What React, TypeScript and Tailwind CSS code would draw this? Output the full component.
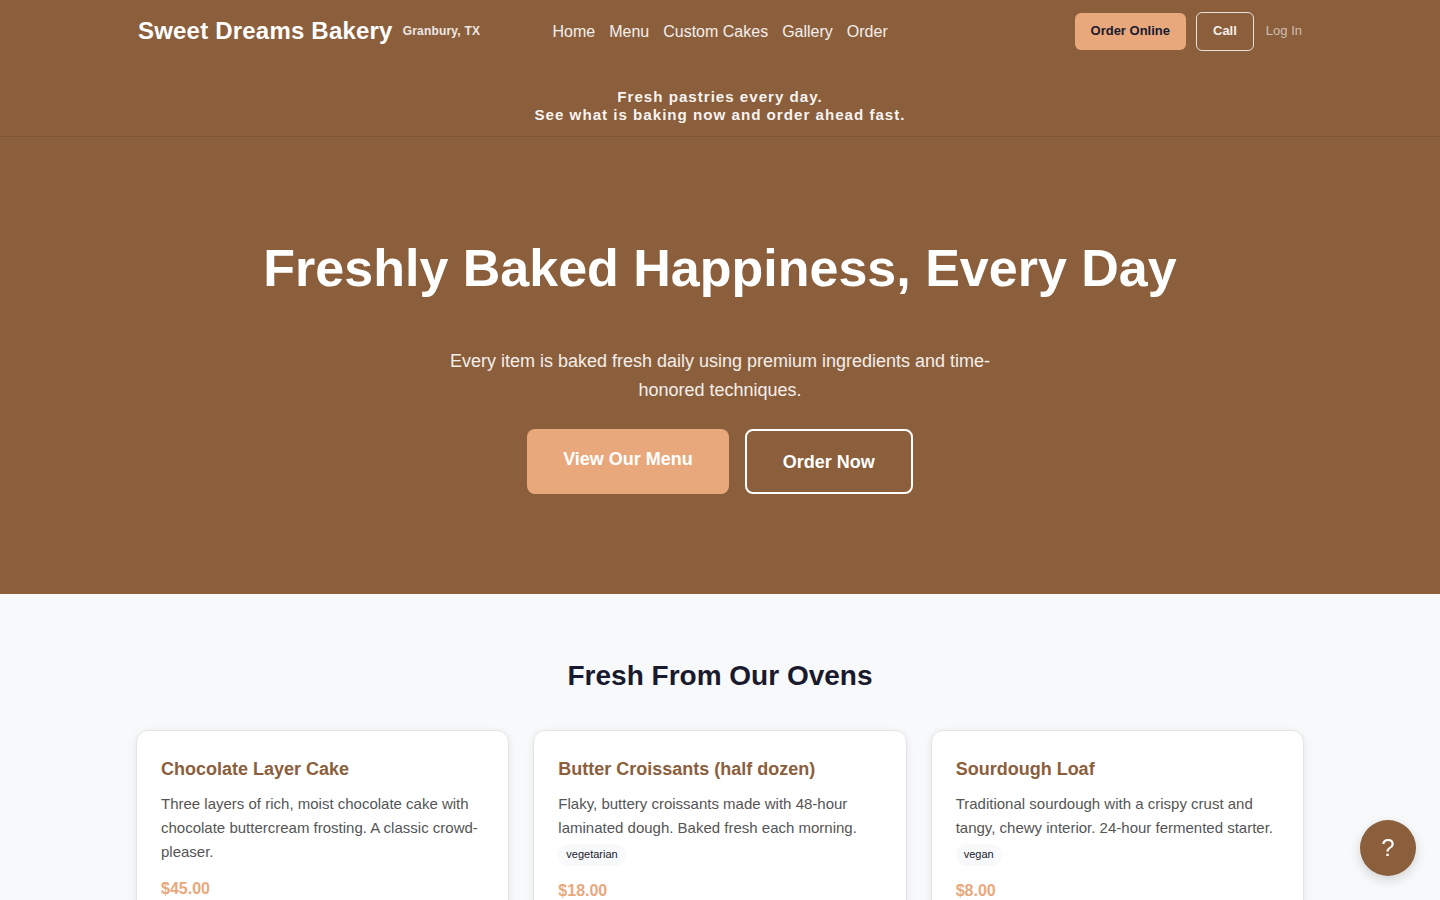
const font = "font-['Liberation_Sans',Arial,sans-serif]";

const cards = [
  { title: "Chocolate Layer Cake", text: "Three layers of rich, moist chocolate cake with chocolate buttercream frosting. A classic crowd-pleaser.", tag: "", price: "$45.00" },
  { title: "Butter Croissants (half dozen)", text: "Flaky, buttery croissants made with 48-hour laminated dough. Baked fresh each morning.", tag: "vegetarian", price: "$18.00" },
  { title: "Sourdough Loaf", text: "Traditional sourdough with a crispy crust and tangy, chewy interior. 24-hour fermented starter.", tag: "vegan", price: "$8.00" },
];

export default function App() {
  return (
    <div className={`${font} h-[900px] overflow-hidden bg-[#f8f9fa] leading-[1.6]`}>
      <header className="bg-[#8b5e3c] border-b border-[#7d5436]">
        <div className="mx-auto w-[1168px] h-[62px] flex items-center">
          <div className="w-[416.5px] pl-[2px] flex items-center gap-[10px] tracking-[0.2px]">
            <span className="text-[24px] font-bold text-white leading-[1.6]">Sweet Dreams Bakery</span>
            <span className="text-[12px] font-bold text-white/85 pt-[1px]">Granbury, TX</span>
          </div>
          <nav className="flex gap-[14px] pt-[1px] text-[16px] text-white/90">
            <a>Home</a><a>Menu</a><a>Custom Cakes</a><a>Gallery</a><a>Order</a>
          </nav>
          <div className="ml-auto flex items-center gap-[10px]">
            <a className="h-[37px] px-4 flex items-center rounded-md bg-[#e9a87c] text-[13px] font-bold text-[#1a1a2e]">Order Online</a>
            <a className="h-[39px] mt-[1px] pl-[16px] pr-[16px] flex items-center rounded-md border-[1.5px] border-white/80 text-[13px] font-bold text-white/90">Call</a>
            <a className="pl-[2px] pr-[2px] text-[13px] text-white/60">Log In</a>
          </div>
        </div>
        <p className="pt-[26px] pb-[12px] text-center text-[15.2px] leading-[18px] font-bold tracking-[0.97px] text-white/95">
          Fresh pastries every day.<br />See what is baking now and order ahead fast.
        </p>
      </header>
      <section className="h-[457px] bg-[#8b5e3c] pt-[95px] flex flex-col items-center">
        <h1 className="text-[52px] font-bold leading-[1.4] text-white">Freshly Baked Happiness, Every Day</h1>
        <p className="mt-[42px] w-[560px] text-center text-[18px] text-white/90 leading-[29px]">
          Every item is baked fresh daily using premium ingredients and time-honored techniques.
        </p>
        <div className="mt-[24px] flex gap-4">
          <a className="px-9 py-4 rounded-lg bg-[#e9a87c] text-[18px] font-bold text-white">View Our Menu</a>
          <a className="px-9 pt-[17px] pb-[15px] rounded-lg border-2 border-white text-[18px] font-bold text-white">Order Now</a>
        </div>
      </section>
      <section className="pt-[59px]">
        <h2 className="text-center text-[28px] font-bold leading-[45px] text-[#1a1a2e]">Fresh From Our Ovens</h2>
        <div className="mx-auto mt-[32px] w-[1168px] grid grid-cols-3 gap-[24px]">
          {cards.map((c) => (
            <div key={c.title} className="rounded-xl border border-[#e5e5e5] bg-white px-[24px] pt-[24px] pb-[24px] shadow-[0_2px_8px_rgba(0,0,0,0.08)]">
              <h3 className="text-[18px] font-bold leading-[28px] text-[#8b5e3c]">{c.title}</h3>
              <p className="mt-[9px] text-[15px] leading-[24px] text-[#555555]">{c.text}</p>
              {c.tag && (
                <div className="flex mt-[4px]">
                  <span className="rounded-full bg-[#f8f9fa] px-2 h-[22px] flex items-center text-[11px] text-[#1a1a2e]">{c.tag}</span>
                </div>
              )}
              <p className="mt-[12px] text-[16px] font-bold leading-[26px] text-[#e9a87c]">{c.price}</p>
            </div>
          ))}
        </div>
      </section>
      <button className="fixed right-[24px] bottom-[24px] w-[56px] h-[56px] rounded-full bg-[#8b5e3c] text-white text-[24px] flex items-center justify-center shadow-[0_4px_12px_rgba(0,0,0,0.15)]">?</button>
    </div>
  );
}
